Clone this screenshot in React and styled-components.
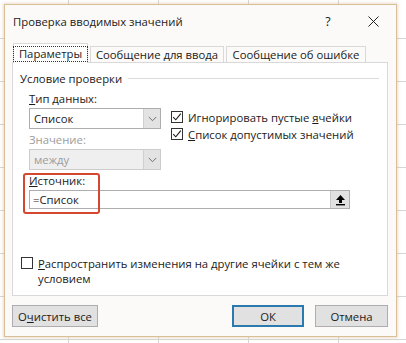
import React from 'react'
import styled, { createGlobalStyle } from 'styled-components'

const GlobalStyle = createGlobalStyle`
    html, body {
        margin: 0;
        padding: 0;
    }
    body {
        width: 406px;
        height: 343px;
        overflow: hidden;
        font-family: 'Open Sans', 'Noto Sans', 'Liberation Sans', sans-serif;
        font-size: 11.3px;
        color: #1b1b1b;
        background-color: #ffffff;
        background-image:
            linear-gradient(to right, #d6d6d6 1px, transparent 1px),
            linear-gradient(to bottom, #d6d6d6 1px, transparent 1px);
        background-size: 90px 43px;
        background-position: 68px 38px;
    }
`

function App() {
    return (
        <Stage>
            <GlobalStyle />
            <Dialog>
                <TitleBar>
                    <Title>Проверка вводимых значений</Title>
                    <HelpMark>?</HelpMark>
                    <CloseButton>
                        <svg width="11" height="11" viewBox="0 0 11 11">
                            <path d="M0.5 0.5 L10.5 10.5 M10.5 0.5 L0.5 10.5" stroke="#222" strokeWidth="1" fill="none" />
                        </svg>
                    </CloseButton>
                </TitleBar>
                <Body>
                    <Tabs>
                        <Tab active width={75}>
                            <FocusRing>Параметры</FocusRing>
                        </Tab>
                        <Tab width={134}>Сообщение для ввода</Tab>
                        <Tab width={140}>Сообщение об ошибке</Tab>
                    </Tabs>
                    <Panel>
                        <Legend>
                            <span>Условие проверки</span>
                            <LegendLine />
                        </Legend>
                        <FieldsRow>
                            <LeftCol>
                                <Label>
                                    <u>Т</u>ип данных:
                                </Label>
                                <Combo>
                                    <ComboValue>Список</ComboValue>
                                    <ComboButton>
                                        <Chevron />
                                    </ComboButton>
                                </Combo>
                                <Label disabled>Значение:</Label>
                                <Combo disabled>
                                    <ComboValue>между</ComboValue>
                                    <ComboButton>
                                        <Chevron />
                                    </ComboButton>
                                </Combo>
                            </LeftCol>
                            <RightCol>
                                <CheckRow>
                                    <CheckBox checked />
                                    <span>
                                        Игнорировать пустые <u>я</u>чейки
                                    </span>
                                </CheckRow>
                                <CheckRow>
                                    <CheckBox checked />
                                    <span>
                                        <u>С</u>писок допустимых значений
                                    </span>
                                </CheckRow>
                            </RightCol>
                        </FieldsRow>
                        <SourceField>
                            <Highlight />
                            <Label>
                                <u>И</u>сточник:
                            </Label>
                            <SourceInput>
                                <SourceValue>=Список</SourceValue>
                                <CollapseButton>
                                    <svg width="11" height="12" viewBox="0 0 11 12">
                                        <path d="M5.5 1 L10 6 L7 6 L7 9 L4 9 L4 6 L1 6 Z" fill="#000" />
                                        <rect x="1" y="10" width="9" height="1.4" fill="#000" />
                                    </svg>
                                </CollapseButton>
                            </SourceInput>
                        </SourceField>
                        <SpreadRow>
                            <CheckBox />
                            <SpreadText>
                                <u>Р</u>аспространить изменения на другие ячейки с тем же условием
                            </SpreadText>
                        </SpreadRow>
                    </Panel>
                    <Footer>
                        <Button width={86}>
                            О<u>ч</u>истить все
                        </Button>
                        <FooterSpacer />
                        <Button width={72} primary>
                            ОК
                        </Button>
                        <Button width={73}>Отмена</Button>
                    </Footer>
                </Body>
            </Dialog>
        </Stage>
    )
}

function CheckBox({ checked }) {
    return (
        <Box>
            {checked && (
                <svg width="10" height="10" viewBox="0 0 10 10">
                    <path d="M1.2 5.2 L3.8 7.8 L8.8 1.6" stroke="#1b1b1b" strokeWidth="1.1" fill="none" />
                </svg>
            )}
        </Box>
    )
}

function Chevron() {
    return (
        <svg width="9" height="6" viewBox="0 0 9 6">
            <path d="M0.8 1 L4.5 4.7 L8.2 1" stroke="#6d6d6d" strokeWidth="1" fill="none" />
        </svg>
    )
}

const Stage = styled.div`
    padding: 4px 0 0 4px;
`

const Dialog = styled.div`
    width: 391px;
    height: 331px;
    background: #fbfaf8;
    border: 1px solid #d9bf98;
    box-shadow: 0 0 3px 1px rgba(210, 180, 140, 0.45);
    display: flex;
    flex-direction: column;
`

const TitleBar = styled.div`
    height: 32px;
    display: flex;
    align-items: center;
    padding-left: 8px;
`

const Title = styled.div`
    flex: 1;
    font-size: 11.3px;
    color: #1b1b1b;
`

const HelpMark = styled.div`
    width: 14px;
    font-size: 12.5px;
    text-align: center;
    margin-right: 33px;
`

const CloseButton = styled.div`
    width: 11px;
    height: 11px;
    display: flex;
    margin-right: 17px;
`

const Body = styled.div`
    flex: 1;
    display: flex;
    flex-direction: column;
    padding: 7px 8px 0 7px;
`

const Tabs = styled.div`
    display: flex;
    align-items: flex-end;
    gap: 2px;
    height: 19px;
    padding-left: 1px;
    position: relative;
    z-index: 1;
    margin-bottom: -1px;
`

const Tab = styled.div`
    width: ${(p) => p.width}px;
    height: ${(p) => (p.active ? 20 : 17)}px;
    box-sizing: border-box;
    border: 1px solid #d9d9d9;
    border-bottom: ${(p) => (p.active ? 'none' : '1px solid #d9d9d9')};
    background: ${(p) => (p.active ? '#ffffff' : '#fbfaf8')};
    display: flex;
    align-items: center;
    justify-content: center;
    white-space: nowrap;
`

const FocusRing = styled.div`
    border: 1px dotted #333;
    padding: 0 5px;
    line-height: 14px;
    margin-top: 1px;
`

const Panel = styled.div`
    flex: 1;
    background: #ffffff;
    border: 1px solid #d9d9d9;
    display: flex;
    flex-direction: column;
    padding: 0 0 9px 0;
`

const Legend = styled.div`
    display: flex;
    align-items: center;
    margin: 8px 8px 0 7px;
    height: 14px;
    white-space: nowrap;
`

const LegendLine = styled.div`
    flex: 1;
    height: 1px;
    background: #dcdcdc;
    margin-left: 6px;
`

const FieldsRow = styled.div`
    display: flex;
    gap: 10px;
    margin: 7px 0 0 16px;
`

const LeftCol = styled.div`
    display: flex;
    flex-direction: column;
    width: 132px;
`

const RightCol = styled.div`
    display: flex;
    flex-direction: column;
    gap: 3px;
    padding-top: 18px;
`

const Label = styled.div`
    line-height: 14px;
    color: ${(p) => (p.disabled ? '#9c9c9c' : '#1b1b1b')};
    margin-bottom: 2px;
`

const Combo = styled.div`
    height: 21px;
    box-sizing: border-box;
    border: 1px solid ${(p) => (p.disabled ? '#cccccc' : '#adadad')};
    background: ${(p) => (p.disabled ? '#efefef' : '#ffffff')};
    color: ${(p) => (p.disabled ? '#9c9c9c' : '#1b1b1b')};
    display: flex;
    margin-bottom: 4px;
`

const ComboValue = styled.div`
    flex: 1;
    display: flex;
    align-items: center;
    padding-left: 4px;
`

const ComboButton = styled.div`
    width: 16px;
    background: #e3e3e3;
    border-left: 1px solid #d0d0d0;
    display: flex;
    align-items: center;
    justify-content: center;
`

const CheckRow = styled.div`
    display: flex;
    align-items: center;
    gap: 5px;
    height: 14px;
    white-space: nowrap;
`

const Box = styled.div`
    width: 12px;
    height: 12px;
    box-sizing: border-box;
    border: 1px solid #333333;
    background: #ffffff;
    display: flex;
    align-items: center;
    justify-content: center;
    flex-shrink: 0;
`

const SourceField = styled.div`
    position: relative;
    margin: 0 0 0 16px;
    width: 321px;
`

const Highlight = styled.div`
    position: absolute;
    left: -6px;
    top: -1px;
    width: 77px;
    height: 41px;
    box-sizing: border-box;
    border: 2px solid #d4482f;
    border-radius: 3px;
    pointer-events: none;
`

const SourceInput = styled.div`
    height: 19px;
    box-sizing: border-box;
    border: 1px solid #adadad;
    background: #ffffff;
    display: flex;
    margin-top: 2px;
`

const SourceValue = styled.div`
    flex: 1;
    display: flex;
    align-items: center;
    padding-left: 3px;
`

const CollapseButton = styled.div`
    width: 18px;
    background: #e1e1e1;
    border-left: 1px solid #c8c8c8;
    display: flex;
    align-items: center;
    justify-content: center;
`

const SpreadRow = styled.div`
    margin: auto 0 0 8px;
    display: flex;
    align-items: flex-start;
    gap: 5px;
`

const SpreadText = styled.div`
    width: 320px;
    line-height: 15px;
    margin-top: -1px;
`

const Footer = styled.div`
    display: flex;
    gap: 11px;
    padding: 9px 0 9px 0;
`

const FooterSpacer = styled.div`
    flex: 1;
`

const Button = styled.div`
    width: ${(p) => p.width}px;
    height: 22px;
    box-sizing: border-box;
    border: ${(p) => (p.primary ? '2px solid #2a7ab0' : '1px solid #adadad')};
    background: #e1e1e1;
    display: flex;
    align-items: center;
    justify-content: center;
    white-space: nowrap;
`

export default App
